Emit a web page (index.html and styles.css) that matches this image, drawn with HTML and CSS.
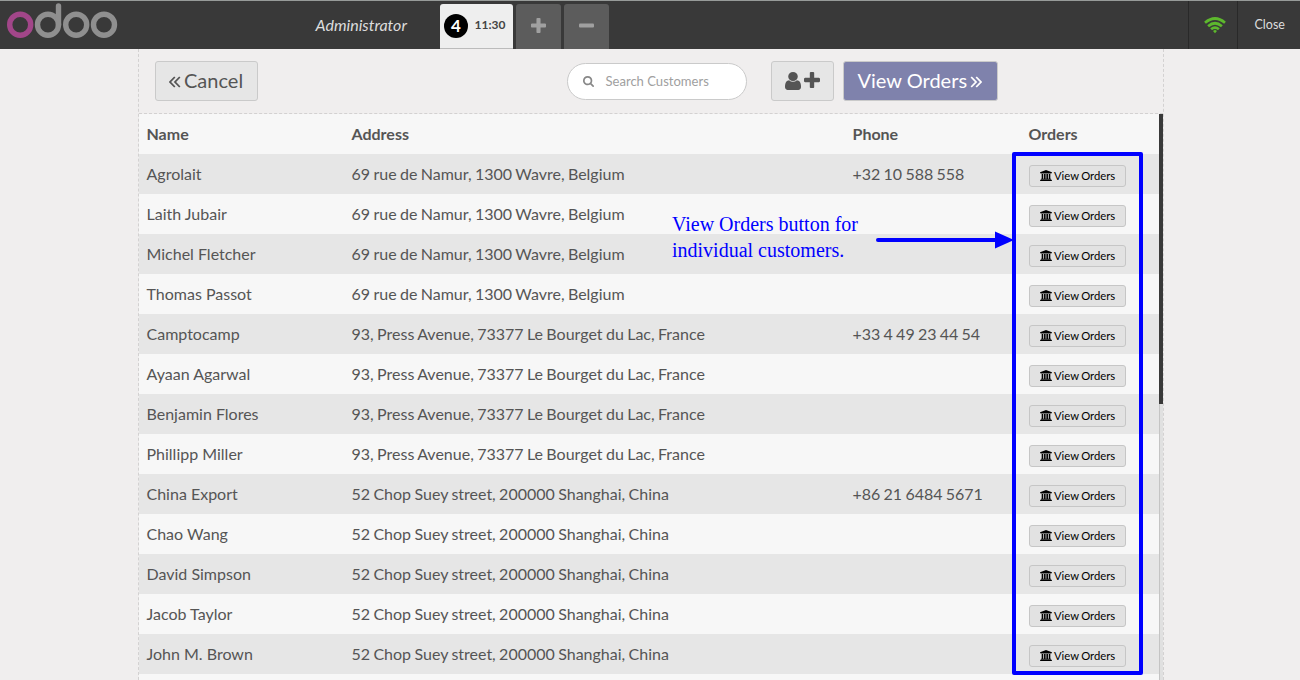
FILE: index.html
```html
<!DOCTYPE html>
<html lang="en">
<head>
<meta charset="utf-8">
<title>Customers</title>
<link rel="stylesheet" href="styles.css">
</head>
<body>
<svg class="sprite" aria-hidden="true">
  <symbol id="bank" viewBox="0 0 1920 1792"><path d="M960 0l960 384v128h-128q0 26-20.5 45t-48.5 19h-1526q-28 0-48.5-19t-20.5-45h-128v-128zm-704 640h256v768h128v-768h256v768h128v-768h256v768h128v-768h256v768h59q28 0 48.5 19t20.5 45v64h-1664v-64q0-26 20.5-45t48.5-19h59v-768zm1595 960q28 0 48.5 19t20.5 45v128h-1920v-128q0-26 20.5-45t48.5-19h1782z"/></symbol>
  <symbol id="plus" viewBox="0 128 1408 1408"><path d="M1408 736v192q0 40-28 68t-68 28h-416v416q0 40-28 68t-68 28h-192q-40 0-68-28t-28-68v-416h-416q-40 0-68-28t-28-68v-192q0-40 28-68t68-28h416v-416q0-40 28-68t68-28h192q40 0 68 28t28 68v416h416q40 0 68 28t28 68z"/></symbol>
</svg>
<header class="topbar">
  <svg class="logo" width="118" height="48" viewBox="0 0 118 48">
    <g fill="none" stroke="#8f8f8f" stroke-width="5.4">
      <circle cx="48" cy="23.7" r="10.5"/><path d="M58.5 23.7V4.9" stroke-linecap="round"/>
      <circle cx="76.2" cy="23.7" r="10.5"/><circle cx="104" cy="23.7" r="10.5"/>
      <circle cx="20.2" cy="23.7" r="10.5" stroke="#a24689"/>
    </g>
  </svg>
  <div class="username">Administrator</div>
  <div class="tabs">
    <div class="tab active"><span class="badge">4</span><span class="time">11:30</span></div>
    <div class="tab"><svg width="15" height="15"><use href="#plus"/></svg></div>
    <div class="tab"><svg width="15" height="15"><rect y="5.500" width="15" height="4" rx="1"/></svg></div>
  </div>
  <div class="status">
    <svg width="22" height="17" viewBox="0 0 22 17" fill="none" stroke="#5db82d" stroke-width="2.7">
      <path d="M1 5.700Q11-2.700 21 5.700M4.100 9.200Q11 3.300 17.900 9.200M7.100 12.300Q11 8.900 14.900 12.300"/><path d="M11 12.800l2 1.300-2 2.200-2-2.200z" fill="#5db82d" stroke="none"/>
    </svg>
  </div>
  <div class="close">Close</div>
</header>
<main class="screen">
  <section class="toolbar">
    <div class="button cancel"><svg width="12" height="12" viewBox="0 0 12 12"><path d="M5.8 1L1 6l4.8 5M10.8 1L6 6l4.8 5"/></svg><span>Cancel</span></div>
    <div class="search"><svg width="11" height="11" viewBox="0 128 1664 1664"><path d="M1152 832q0-185-131.5-316.5t-316.5-131.5-316.5 131.5-131.5 316.5 131.5 316.5 316.5 131.5 316.5-131.5 131.5-316.5zm512 832q0 52-38 90t-90 38q-54 0-90-38l-343-342q-179 124-399 124-143 0-273.5-55.5t-225-150-150-225-55.5-273.5 55.5-273.5 150-225 225-150 273.5-55.5 273.5 55.5 225 150 150 225 55.5 273.5q0 220-124 399l343 343q37 37 37 90z"/></svg><span>Search Customers</span></div>
    <div class="button add">
      <svg width="16" height="18" viewBox="0 128 1280 1536" preserveAspectRatio="none"><path d="M1280 1399q0 109-62.5 187t-150.5 78h-854q-88 0-150.5-78t-62.5-187q0-85 8.5-160.5t31.5-152 58.5-131 94-89 134.5-34.5q131 128 313 128t313-128q76 0 134.5 34.5t94 89 58.5 131 31.5 152 8.5 160.5zm-256-887q0 159-112.5 271.5t-271.5 112.5-271.5-112.5-112.5-271.5 112.5-271.5 271.5-112.5 271.5 112.5 112.5 271.5z"/></svg>
      <svg class="add-plus" width="16" height="16"><use href="#plus"/></svg>
    </div>
    <div class="button primary"><span>View Orders</span><svg width="12" height="12" viewBox="0 0 12 12"><path d="M1.2 1L6 6l-4.8 5M6.2 1L11 6l-4.8 5"/></svg></div>
  </section>
  <section class="list">
    <div class="rows" id="rows">
      <div class="row head"><div>Name</div><div>Address</div><div>Phone</div><div>Orders</div></div>
    </div>
    <div class="scrollbar"><div class="thumb"></div></div>
  </section>
</main>
<div class="highlight"></div>
<div class="note">View Orders button for<br>individual customers.</div>
<svg class="arrow" width="140" height="18" viewBox="0 0 140 18"><path d="M3 9H122" stroke="#00f" stroke-width="4" stroke-linecap="round"/><path d="M120 .5L139 9l-19 8.500z" fill="#00f"/></svg>
<script src="rows.js"></script>
</body>
</html>
```
FILE: styles.css
```css
* { box-sizing: border-box; }
body { margin: 0; height: 680px; overflow: hidden; position: relative; background: #f0eeee; color: #555; font-family: Lato, "Liberation Sans", sans-serif; font-size: 16px; }
svg { display: block; flex: none; }
.sprite { position: absolute; width: 0; height: 0; }
.topbar { display: flex; height: 49px; background: #393939; border-top: 1px solid #979b99; }
.username { width: 322px; padding-left: 197.500px; line-height: 48px; font-style: italic; color: #ddd; white-space: nowrap; }
.tabs { display: flex; gap: 3px; padding-top: 3px; }
.tab { width: 45px; display: flex; align-items: center; justify-content: center; padding-bottom: 2px; border-radius: 3px 3px 0 0; background: #5c5c5c; fill: #a0a0a0; }
.tab.active { width: 73px; justify-content: flex-start; padding: 0 0 0 4px; background: #eee; border-bottom: 1px solid #bbb; color: #444; }
.badge { width: 24px; height: 24px; border-radius: 50%; background: #000; color: #fff; font-size: 17px; line-height: 24px; font-weight: bold; text-align: center; }
.time { margin: -3px 0 0 6.500px; font-size: 12px; font-weight: bold; }
.status, .close { border-left: 1px solid #292929; }
.status { width: 49px; margin-left: auto; padding: 16px 0 0 15px; }
.close { width: 63px; padding-left: 16.500px; line-height: 48px; font-size: 12.500px; color: #ddd; }
.screen { width: 1026px; height: 631px; margin-left: 138px; border: 1px dashed #d3d1d1; border-width: 0 1px; }
.toolbar { height: 65px; display: flex; padding: 12px 0 0 16px; border-bottom: 1px dashed #d3d1d1; }
.button { height: 40px; display: flex; align-items: center; border: 1px solid #cacaca; border-radius: 3px; background: #e6e6e6; font-size: 20px; line-height: 36px; white-space: nowrap; }
.button span { height: 38px; }
.button path { fill: none; stroke: currentColor; stroke-width: 1.8; }
.cancel { width: 103px; padding-left: 13px; gap: 3px; }
.cancel svg, .primary svg { margin-top: 2px; }
.search { width: 180px; height: 37px; margin: 2px 24px 0 309px; padding-left: 15px; display: flex; align-items: center; gap: 11.500px; border: 1px solid #cacaca; border-radius: 19px; background: #fff; fill: #888; color: #a0a0a0; font-size: 13.060px; line-height: 35px; white-space: nowrap; }
.add { width: 63px; padding-left: 12.500px; gap: 3px; fill: #555; }
.button.add path { fill: #555; stroke: none; }
.add-plus { margin-top: -2px; }
.primary { width: 155px; margin-left: 9px; padding-left: 13.500px; gap: 3px; background: #7f82ac; color: #fff; }
.list { display: flex; height: 566px; overflow: hidden; }
.rows { width: 1020px; }
.row { display: grid; grid-template-columns: 205px 501px 176px 138px; height: 40px; line-height: 40px; background: #f7f7f7; white-space: nowrap; word-spacing: -0.85px; }
.row:nth-child(even) { background: #e6e6e6; }
.row > div { padding-left: 7.500px; }
.row > div:first-child { word-spacing: 0; }
.row > div:nth-child(2) { word-spacing: -0.72px; }
.row > div:last-child { padding-left: 8px; }
.row.head > div:last-child { padding-left: 7.500px; }
.head { font-weight: bold; }
.view { width: 97px; height: 22px; margin: 11px 0 0 0; padding-left: 9.500px; display: flex; align-items: center; gap: 2.500px; border: 1px solid #c6c6c6; border-radius: 3px; background: #e2e2e2; color: #000; fill: #000; font-size: 11.250px; line-height: 20px; word-spacing: -0.5px; }
.view svg { margin-top: -1px; }
.scrollbar { width: 4px; background: #e0e0e0; border-left: 1px solid #c4c4c4; }
.thumb { width: 4px; height: 290px; margin-left: -1px; background: #393939; }
.highlight { position: absolute; left: 1012px; top: 152px; width: 131px; height: 523px; border: 4px solid #00f; border-radius: 2px; }
.note { position: absolute; left: 672px; top: 211px; font: 20px/26px "Liberation Serif", serif; color: #00f; white-space: nowrap; }
.arrow { position: absolute; left: 875px; top: 231px; }
```
FILE: rows.js
```js
const namur = "69 rue de Namur, 1300 Wavre, Belgium";
const press = "93, Press Avenue, 73377 Le Bourget du Lac, France";
const chop = "52 Chop Suey street, 200000 Shanghai, China";
const customers = [
  ["Agrolait", namur, "+32 10 588 558"],
  ["Laith Jubair", namur, ""],
  ["Michel Fletcher", namur, ""],
  ["Thomas Passot", namur, ""],
  ["Camptocamp", press, "+33 4 49 23 44 54"],
  ["Ayaan Agarwal", press, ""],
  ["Benjamin Flores", press, ""],
  ["Phillipp Miller", press, ""],
  ["China Export", chop, "+86 21 6484 5671"],
  ["Chao Wang", chop, ""],
  ["David Simpson", chop, ""],
  ["Jacob Taylor", chop, ""],
  ["John M. Brown", chop, ""]
];
const button = '<div class="view"><svg width="12" height="11" viewBox="0 0 12 11"><use href="#bank" width="12" height="11"/></svg><span>View Orders</span></div>';
document.getElementById("rows").insertAdjacentHTML("beforeend",
  customers.map(c => `<div class="row"><div>${c[0]}</div><div>${c[1]}</div><div>${c[2]}</div><div>${button}</div></div>`).join("") + '<div class="row"></div>');
```
